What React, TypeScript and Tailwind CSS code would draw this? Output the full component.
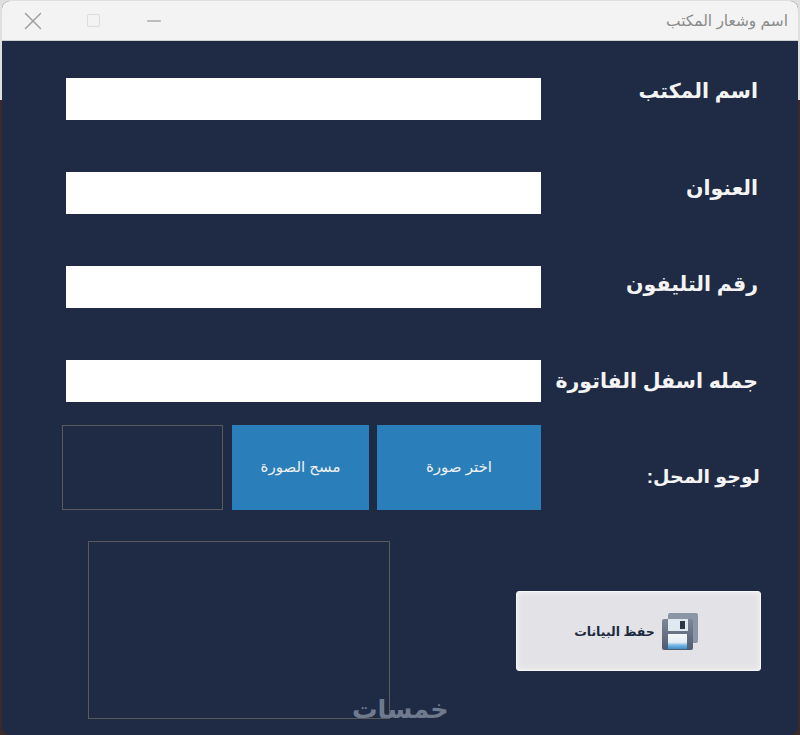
import { X, Minus } from "lucide-react";

const rows = [
  { label: "اسم المكتب", lift: "pb-[16px]" },
  { label: "العنوان", lift: "pb-[10px]" },
  { label: "رقم التليفون", lift: "pb-[6px]" },
  { label: "جمله اسفل الفاتورة", lift: "pb-0" },
];

const arabic = "font-['Liberation_Sans','DejaVu_Sans',sans-serif]";

const FloppyIcon = () => (
  <svg width="37" height="37" viewBox="0 0 37 37" className="shrink-0">
    <defs>
      <linearGradient id="floppyBody" x1="0" y1="0" x2="0" y2="1">
        <stop offset="0" stopColor="#7c8799" />
        <stop offset="1" stopColor="#4f5b70" />
      </linearGradient>
      <linearGradient id="floppyLabel" x1="0" y1="0" x2="0" y2="1">
        <stop offset="0" stopColor="#f4f7f9" />
        <stop offset="0.55" stopColor="#e6eef4" />
        <stop offset="0.75" stopColor="#74b6e4" />
        <stop offset="1" stopColor="#3f8cc6" />
      </linearGradient>
    </defs>
    <rect x="6" y="0" width="30" height="30" rx="2" fill="#8c95a5" />
    <rect x="0" y="6" width="31" height="31" rx="2" fill="url(#floppyBody)" />
    <rect x="6" y="6" width="20" height="12" fill="#dfe9f0" />
    <rect x="18" y="8" width="5" height="8" fill="#2c3648" />
    <rect x="6" y="21" width="19" height="15" fill="url(#floppyLabel)" />
  </svg>
);

const FormRow = ({ label, lift }: { label: string; lift: string }) => (
  <div className="flex h-[42px] items-center mb-[52px]">
    <div className="w-[475px] h-[42px] bg-white ml-[64px]" />
    <p dir="rtl" className={`${arabic} ${lift} w-[217px] text-right text-[20.5px] font-bold text-[#f4f4f4] whitespace-nowrap`}>
      {label}
    </p>
  </div>
);

export default function App() {
  return (
    <div className="w-[800px] h-[735px] pt-[1px] overflow-hidden bg-[linear-gradient(to_bottom,#dfdfdf_0,#dfdfdf_100px,#3b2a27_100px)]">
      <div className="w-[796px] h-[734px] ml-[2px] rounded-[8px] overflow-hidden flex flex-col bg-[#1f2b44]">
        <div className="h-[40px] bg-[#f3f3f3] border-b border-[#d0d0d0] flex items-center shrink-0">
          <X className="ml-[16px] text-[#a0a0a0]" size={30} strokeWidth={1.2} />
          <div className="ml-[39px] w-[13px] h-[13px] rounded-[2px] border border-[#dcdce0]" />
          <Minus className="ml-[43px] text-[#85858f]" size={22} strokeWidth={1.2} />
          <p dir="rtl" className={`${arabic} ml-auto mr-[10px] text-[15.4px] text-[#8a8a8a]`}>
            اسم وشعار المكتب
          </p>
        </div>

        <div className="flex-1 pt-[37px] relative">
          {rows.map((row, index) => (
            <FormRow label={row.label} lift={row.lift} key={index} />
          ))}

          <div className="flex items-center h-[85px] -mt-[29px]">
            <div className="ml-[60px] w-[161px] h-[85px] border border-[#5a5a5a]" />
            <button className={`${arabic} ml-[9px] w-[137px] h-[85px] bg-[#2a7fba] text-[#f0f0f0] text-[15px]`}>
              مسح الصورة
            </button>
            <button className={`${arabic} ml-[8px] w-[164px] h-[85px] bg-[#2a7fba] text-[#f0f0f0] text-[15px]`}>
              اختر صورة
            </button>
            <p dir="rtl" className={`${arabic} w-[219px] pt-[20px] text-right text-[19px] font-bold text-[#f4f4f4]`}>
              لوجو المحل:
            </p>
          </div>

          <div className="flex mt-[31px]">
            <div className="ml-[86px] w-[302px] h-[178px] border border-[#5a5a5a]" />
            <button className="ml-[126px] mt-[50px] w-[245px] h-[80px] rounded-[3px] border border-[#f7f7f9] bg-[#e3e3e7] shadow-[inset_0_0_6px_#f4f4f6] flex items-center justify-center gap-[7px] pr-[4px]">
              <span className={`${arabic} pt-[2px] text-[12.5px] font-bold text-[#1c2a40]`}>حفظ البيانات</span>
              <FloppyIcon />
            </button>
          </div>

          <p className={`${arabic} absolute left-[350px] top-[656px] text-[25.5px] font-bold leading-none text-[#6f7a8f]`}>خمسات</p>
        </div>
      </div>
    </div>
  );
}
